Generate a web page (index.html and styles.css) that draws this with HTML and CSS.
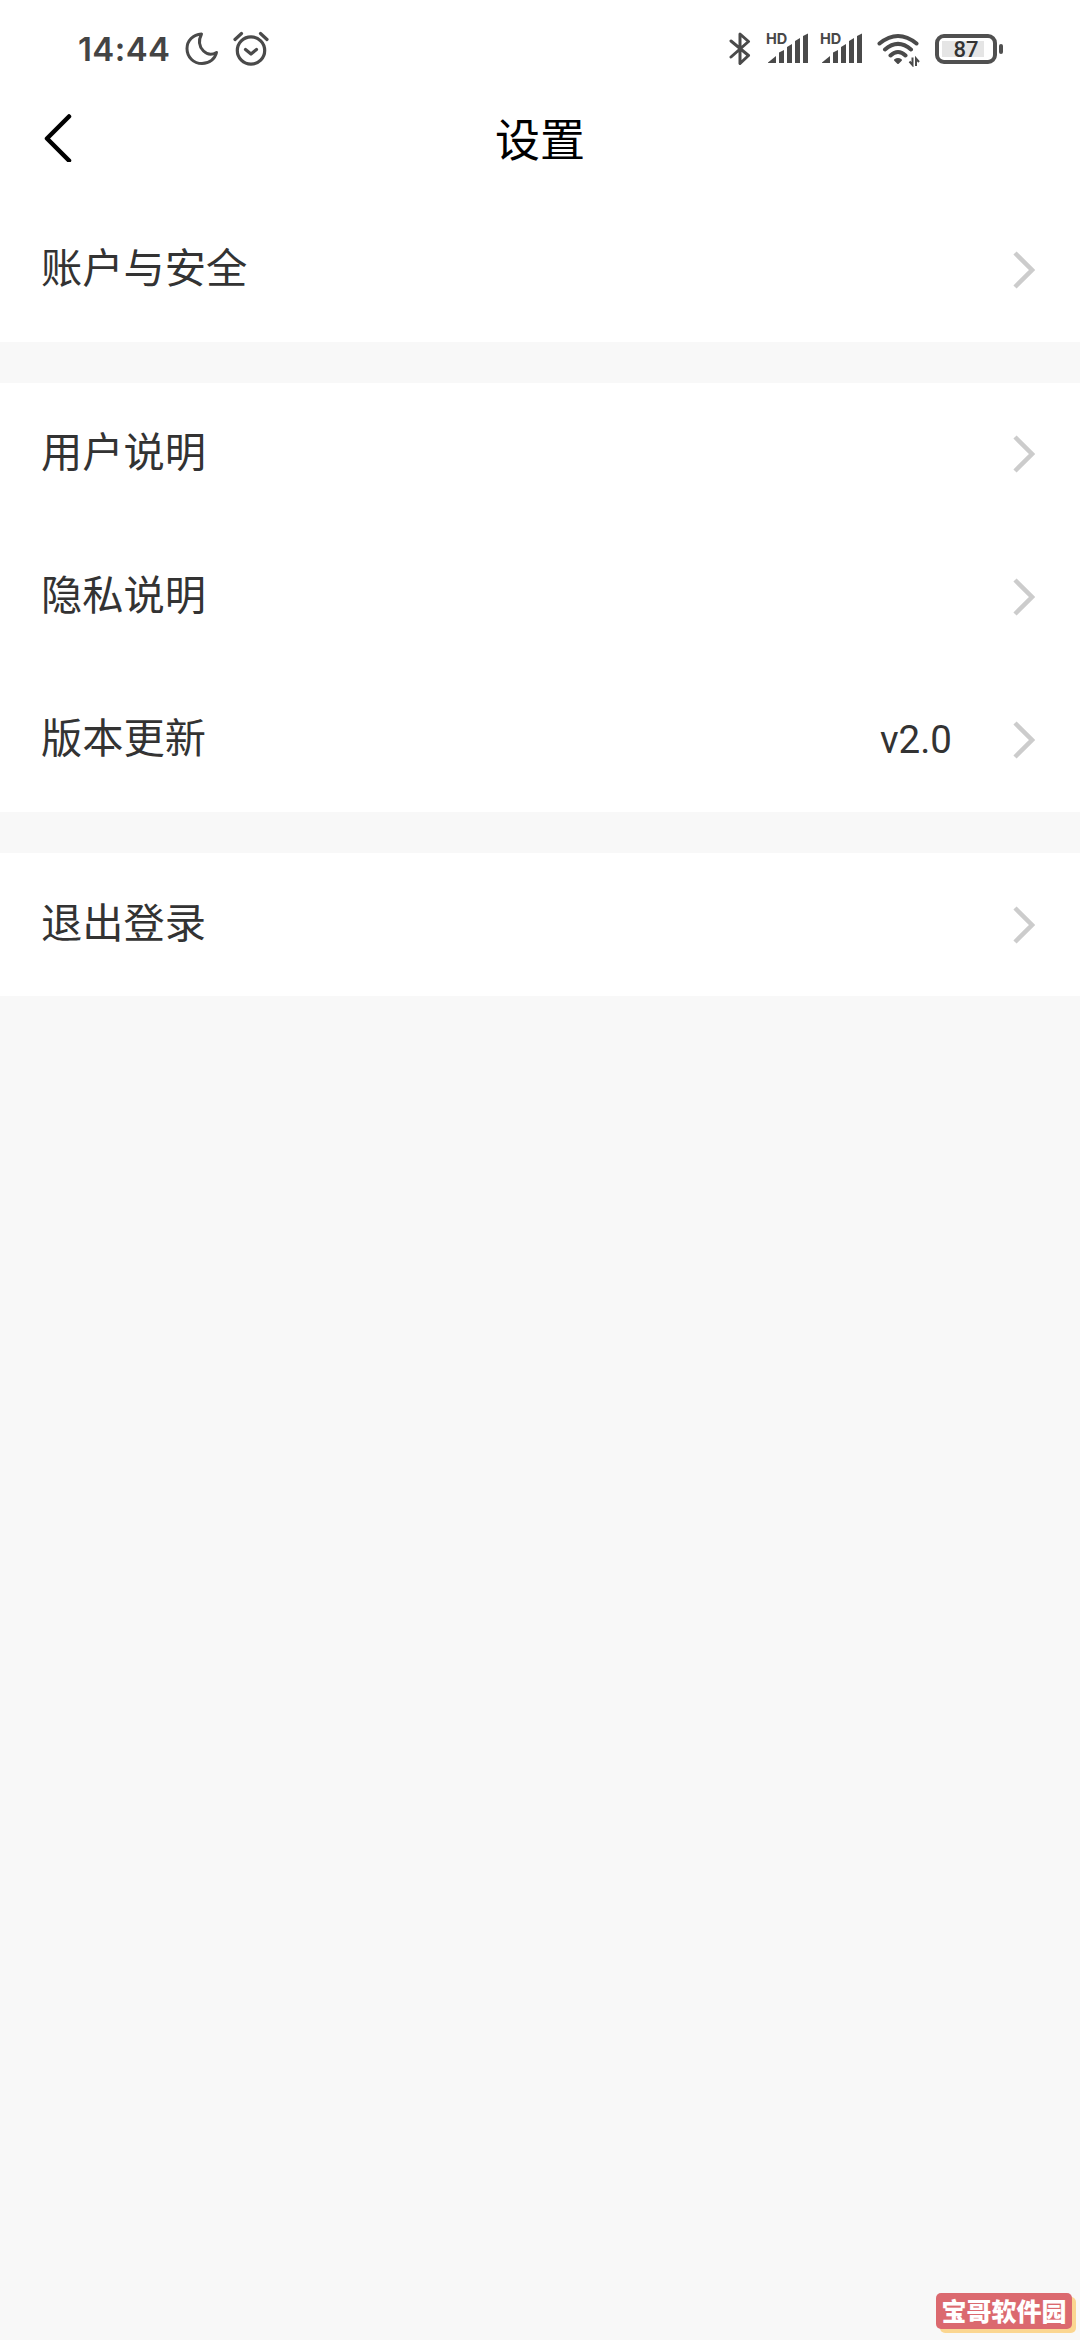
FILE: index.html
```html
<!DOCTYPE html>
<html lang="zh-CN">
<head>
<meta charset="utf-8">
<title>设置</title>
<link rel="stylesheet" href="styles.css">
</head>
<body>
<div class="screen">
  <div class="status">
    <div class="status-left">
      <span class="time">14:44</span>
      <svg class="moon" width="36" height="36" viewBox="0 0 36 36"><path d="M17.5 3C9 3.500 3 9.500 3 17.500C3 26 9.500 32.500 18 32.500C25.500 32.500 31 28 32.500 21.500C28 24 23 23.500 19.500 20C15 15.500 14.500 9 17.500 3Z"/></svg>
      <svg class="alarm" width="36" height="36" viewBox="0 0 36 36"><circle cx="18" cy="19.500" r="13.700"/><path d="M12.500 18.500L18 23L23.500 18.500M2 8.500L8.500 2.500M27.500 2.500L34 8.500"/></svg>
    </div>
    <div class="status-right">
      <svg class="bluetooth" width="22" height="36" viewBox="0 0 22 36"><path d="M2 10L19.500 24.500L11 32.500V3L19.500 10.500L2 26"/></svg>
      <div class="signal"><span class="hd">HD</span><svg width="42" height="31" viewBox="0 0 42 31"><path d="M0 29.500L8 23V30H0ZM11 19.500L16 17V30H11ZM19 14L24 11V30H19ZM27 8L32 5V30H27ZM35 3L40 .500V30H35Z"/></svg></div>
      <div class="signal"><span class="hd">HD</span><svg width="42" height="31" viewBox="0 0 42 31"><path d="M0 29.500L8 23V30H0ZM11 19.500L16 17V30H11ZM19 14L24 11V30H19ZM27 8L32 5V30H27ZM35 3L40 .500V30H35Z"/></svg></div>
      <svg class="wifi" width="44" height="34" viewBox="0 0 44 34"><path class="arc" d="M2.500 10.500Q21-4.500 39.500 10.500M8 16.500Q21 5.400 34 16.500M13.500 22.500Q21 15.500 28.500 22.500"/><path class="fill" d="M18 27Q21 25 24 27L21 30Z"/><path class="arrows" d="M32.500 28.500L35.500 32V24.500M39 33V25.500L42 29"/></svg>
      <div class="battery"><div class="cell"><span class="level">87</span></div><i class="nub"></i></div>
    </div>
  </div>
  <header class="header">
    <svg class="back" width="28" height="48" viewBox="0 0 28 48"><path d="M25 2.500L3 24.500L25 46.500"/></svg>
    <h1 class="title">设置</h1>
  </header>
  <main class="groups">
    <section class="group">
      <div class="row"><span class="label">账户与安全</span><svg class="chevron" width="22" height="38" viewBox="0 0 22 38"><path d="M2 2L19 19L2 36"/></svg></div>
    </section>
    <section class="group">
      <div class="row"><span class="label">用户说明</span><svg class="chevron" width="22" height="38" viewBox="0 0 22 38"><path d="M2 2L19 19L2 36"/></svg></div>
      <div class="row"><span class="label">隐私说明</span><svg class="chevron" width="22" height="38" viewBox="0 0 22 38"><path d="M2 2L19 19L2 36"/></svg></div>
      <div class="row"><span class="label">版本更新</span><span class="value">v2.0</span><svg class="chevron" width="22" height="38" viewBox="0 0 22 38"><path d="M2 2L19 19L2 36"/></svg></div>
    </section>
    <section class="group">
      <div class="row"><span class="label">退出登录</span><svg class="chevron" width="22" height="38" viewBox="0 0 22 38"><path d="M2 2L19 19L2 36"/></svg></div>
    </section>
  </main>
  <div class="badge">宝哥软件园</div>
</div>
</body>
</html>
```
FILE: styles.css
```css
* { box-sizing: border-box; }
body { margin: 0; background: #f8f8f8; font-family: Roboto, "Noto Sans CJK SC", sans-serif; color: #333; }
svg { display: block; flex: none; fill: none; }
.screen { position: relative; width: 1080px; height: 2340px; overflow: hidden; background: #f8f8f8; }
.status { display: flex; justify-content: space-between; height: 98px; padding: 0 77px 0 78px; background: #fff; color: #484848; }
.status-left, .status-right { display: flex; align-items: flex-start; }
.time { width: 106px; padding-top: 29px; font: 600 33px/40px Inter, sans-serif; letter-spacing: .4px; color: #444; }
.moon, .alarm { margin-top: 31px; stroke: #4a4a4a; stroke-width: 3; stroke-linejoin: round; stroke-linecap: round; }
.alarm { margin-left: 13px; stroke-width: 3.2; }
.bluetooth { margin: 31px 17px 0 0; stroke: #4a4a4a; stroke-width: 3; stroke-linejoin: round; stroke-linecap: round; }
.signal { display: grid; width: 42px; margin: 33px 12px 0 0; }
.signal svg, .hd { grid-area: 1 / 1; }
.signal svg { fill: #4a4a4a; }
.hd { margin: -1px 0 0 -2px; font: 700 14.500px/14px Inter, sans-serif; }
.wifi { margin: 33px 14px 0 1px; }
.arc { stroke: #4a4a4a; stroke-width: 4; stroke-linecap: round; }
.fill { fill: #4a4a4a; stroke: #4a4a4a; stroke-linejoin: round; stroke-width: 2; }
.arrows { stroke: #4a4a4a; stroke-width: 2; }
.battery { display: flex; align-items: center; gap: 2px; margin-top: 34px; }
.cell { display: flex; width: 62px; height: 30px; padding: 3px; border: 4px solid #505050; border-radius: 9px; background: linear-gradient(#e5e5e5, #e5e5e5) 3px 3px / 42px 16px no-repeat #fff; }
.level { width: 48px; text-align: center; font: 500 22px/17px Roboto, sans-serif; color: #333; }
.nub { width: 4px; height: 10px; border-radius: 2px; background: #505050; }
.header { display: grid; grid-template-columns: 100px 1fr 100px; align-items: center; height: 100.5px; padding-bottom: 20px; background: #fff; }
.back { margin-left: 44px; stroke: #000; stroke-width: 4.500; stroke-linecap: round; stroke-linejoin: round; }
.title { margin: 0; text-align: center; font: 400 45px/66px "Noto Sans CJK SC", sans-serif; color: #000; }
.groups { display: flex; flex-direction: column; gap: 41.25px; }
.group { background: #fff; }
.row { display: flex; align-items: center; height: 143px; padding: 0 45px 0 41px; }
.label { flex: 1; padding-bottom: 10px; font: 400 41.250px/60px "Noto Sans CJK SC", sans-serif; }
.value { margin-right: 61px; font-size: 38.500px; line-height: 48px; }
.chevron { stroke: #ccc; stroke-width: 4.500; }
.badge { position: absolute; left: 936px; top: 2293px; width: 136px; height: 36px; border-radius: 5px; background: #db696f; box-shadow: 4px 4px 0 #fbd691; color: #fff; text-align: center; font: 900 25px/34px "Noto Sans CJK SC", sans-serif; }
```
